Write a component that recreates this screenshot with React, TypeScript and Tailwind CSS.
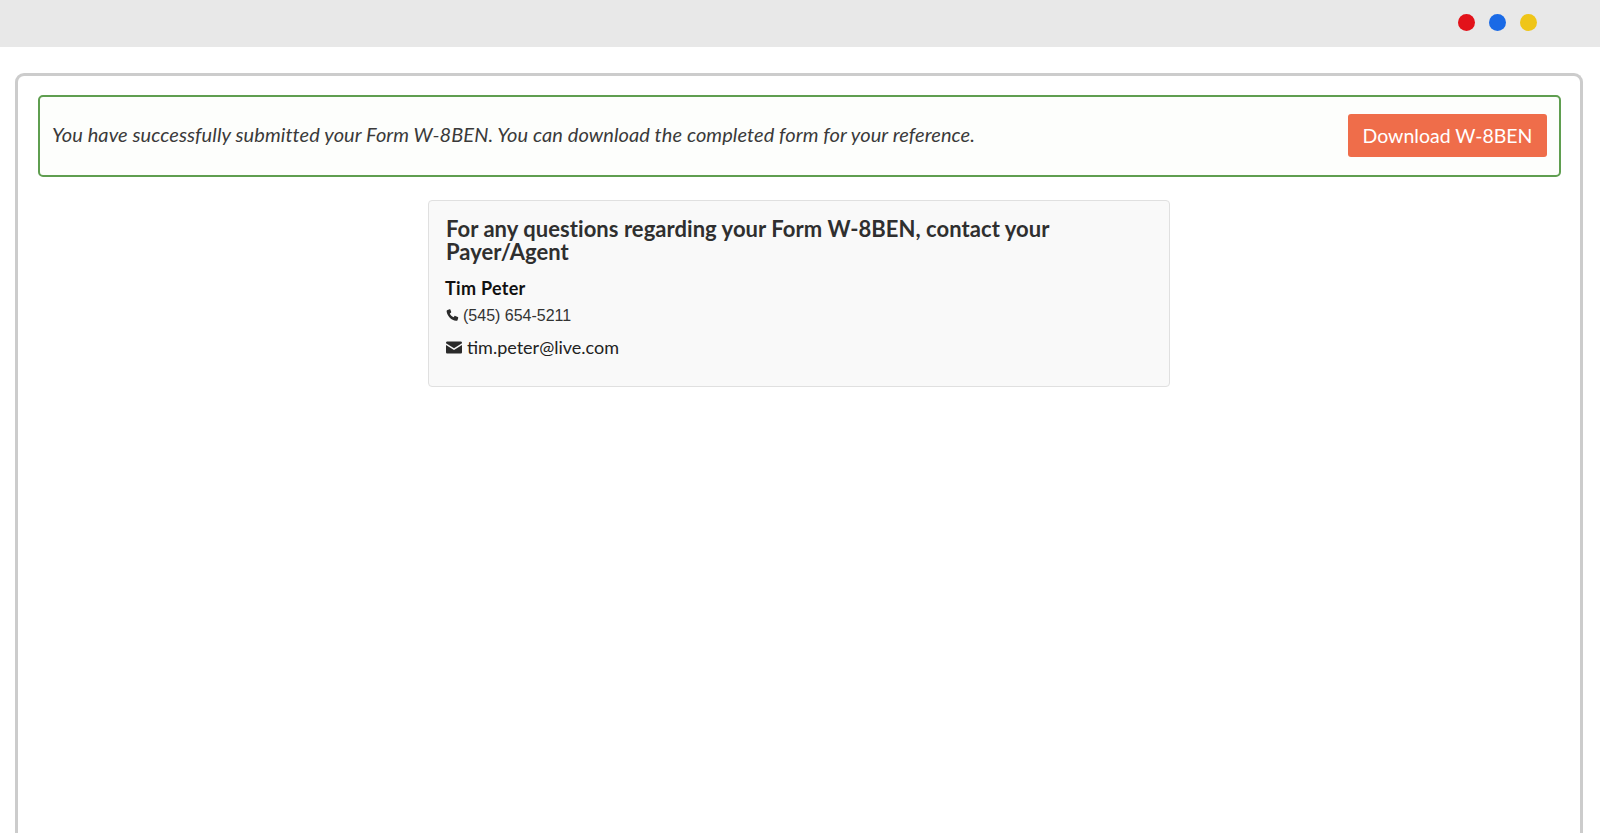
export default function App() {
  return (
    <div className="flex h-[833px] flex-col overflow-hidden bg-white font-['Lato','Liberation_Sans',sans-serif] text-[#333]">
      <header className="flex h-[47px] shrink-0 items-center justify-end gap-[14px] bg-[#e8e8e8] pr-[63px] pb-[2px]">
        <span className="h-[17px] w-[17px] rounded-full bg-[#e2121a]" />
        <span className="h-[17px] w-[17px] rounded-full bg-[#1a6ae6]" />
        <span className="h-[17px] w-[17px] rounded-full bg-[#efc518]" />
      </header>
      <main className="ml-[15px] mr-[17px] mt-[26px] flex-1 rounded-t-[9px] border-[3px] border-b-0 border-[#cccccc] pl-[20px] pr-[19px] pt-[19px]">
        <section className="flex h-[82px] items-center justify-between rounded-[5px] border-2 border-[#5f9e50] bg-[#fdfefc] pb-[1px] pl-[12px] pr-[12px]">
          <p className="mb-[4px] text-[20px] italic tracking-[0.09px] text-[#3a3a3a]">
            You have successfully submitted your Form W-8BEN. You can download the completed form for your reference.
          </p>
          <button className="h-[43px] w-[199px] rounded-[3px] bg-[#ef6d4a] text-[19.5px] text-white">Download W-8BEN</button>
        </section>
        <section className="ml-[390px] mt-[23px] h-[187px] w-[742px] rounded-[4px] border border-[#e0e0e0] bg-[#f9f9f9] pl-[17px] pt-[16px]">
          <h2 className="w-[640px] text-[22px] font-bold leading-[23px] tracking-[0.05px] text-[#2f2f2f]">
            For any questions regarding your Form W-8BEN, contact your Payer/Agent
          </h2>
          <h3 className="mt-[13px] -ml-px text-[18px] font-bold leading-[25px] tracking-[0.3px] text-[#111]">Tim Peter</h3>
          <p className="mt-[4px] flex items-center gap-[4px] font-['Liberation_Sans',sans-serif] text-[16px] leading-[22px] text-[#333]">
            <svg viewBox="0 0 24 24" className="mb-[2px] h-[14px] w-[13px] fill-[#2b2b2b]">
              <path d="M6.6 1.5 2.9 2.6C1.6 3 1 4 1.2 5.4c1 8.4 8.9 16.3 17.4 17.4 1.4.2 2.4-.4 2.8-1.7l1.1-3.7c.2-.7-.1-1.3-.7-1.6l-4.7-2.1c-.6-.3-1.2-.1-1.6.4l-1.6 2.1c-3-1.3-5.6-4-6.9-6.9l2.1-1.6c.5-.4.7-1 .4-1.6L8.2 2.2c-.3-.6-.9-.9-1.6-.7Z" />
            </svg>
            (545) 654-5211
          </p>
          <p className="mt-[8px] flex items-center gap-[5px] text-[18px] leading-[24px] text-[#222]">
            <svg viewBox="0 0 24 18" className="h-[13px] w-[16px] fill-[#2b2b2b]">
              <path d="M2 0h20c1.1 0 2 .9 2 2v.8L12 10.2 0 2.8V2C0 .9.9 0 2 0Z" />
              <path d="M0 5.2v10.8c0 1.1.9 2 2 2h20c1.1 0 2-.9 2-2V5.2l-12 7.4L0 5.2Z" />
            </svg>
            tim.peter@live.com
          </p>
        </section>
      </main>
    </div>
  );
}
